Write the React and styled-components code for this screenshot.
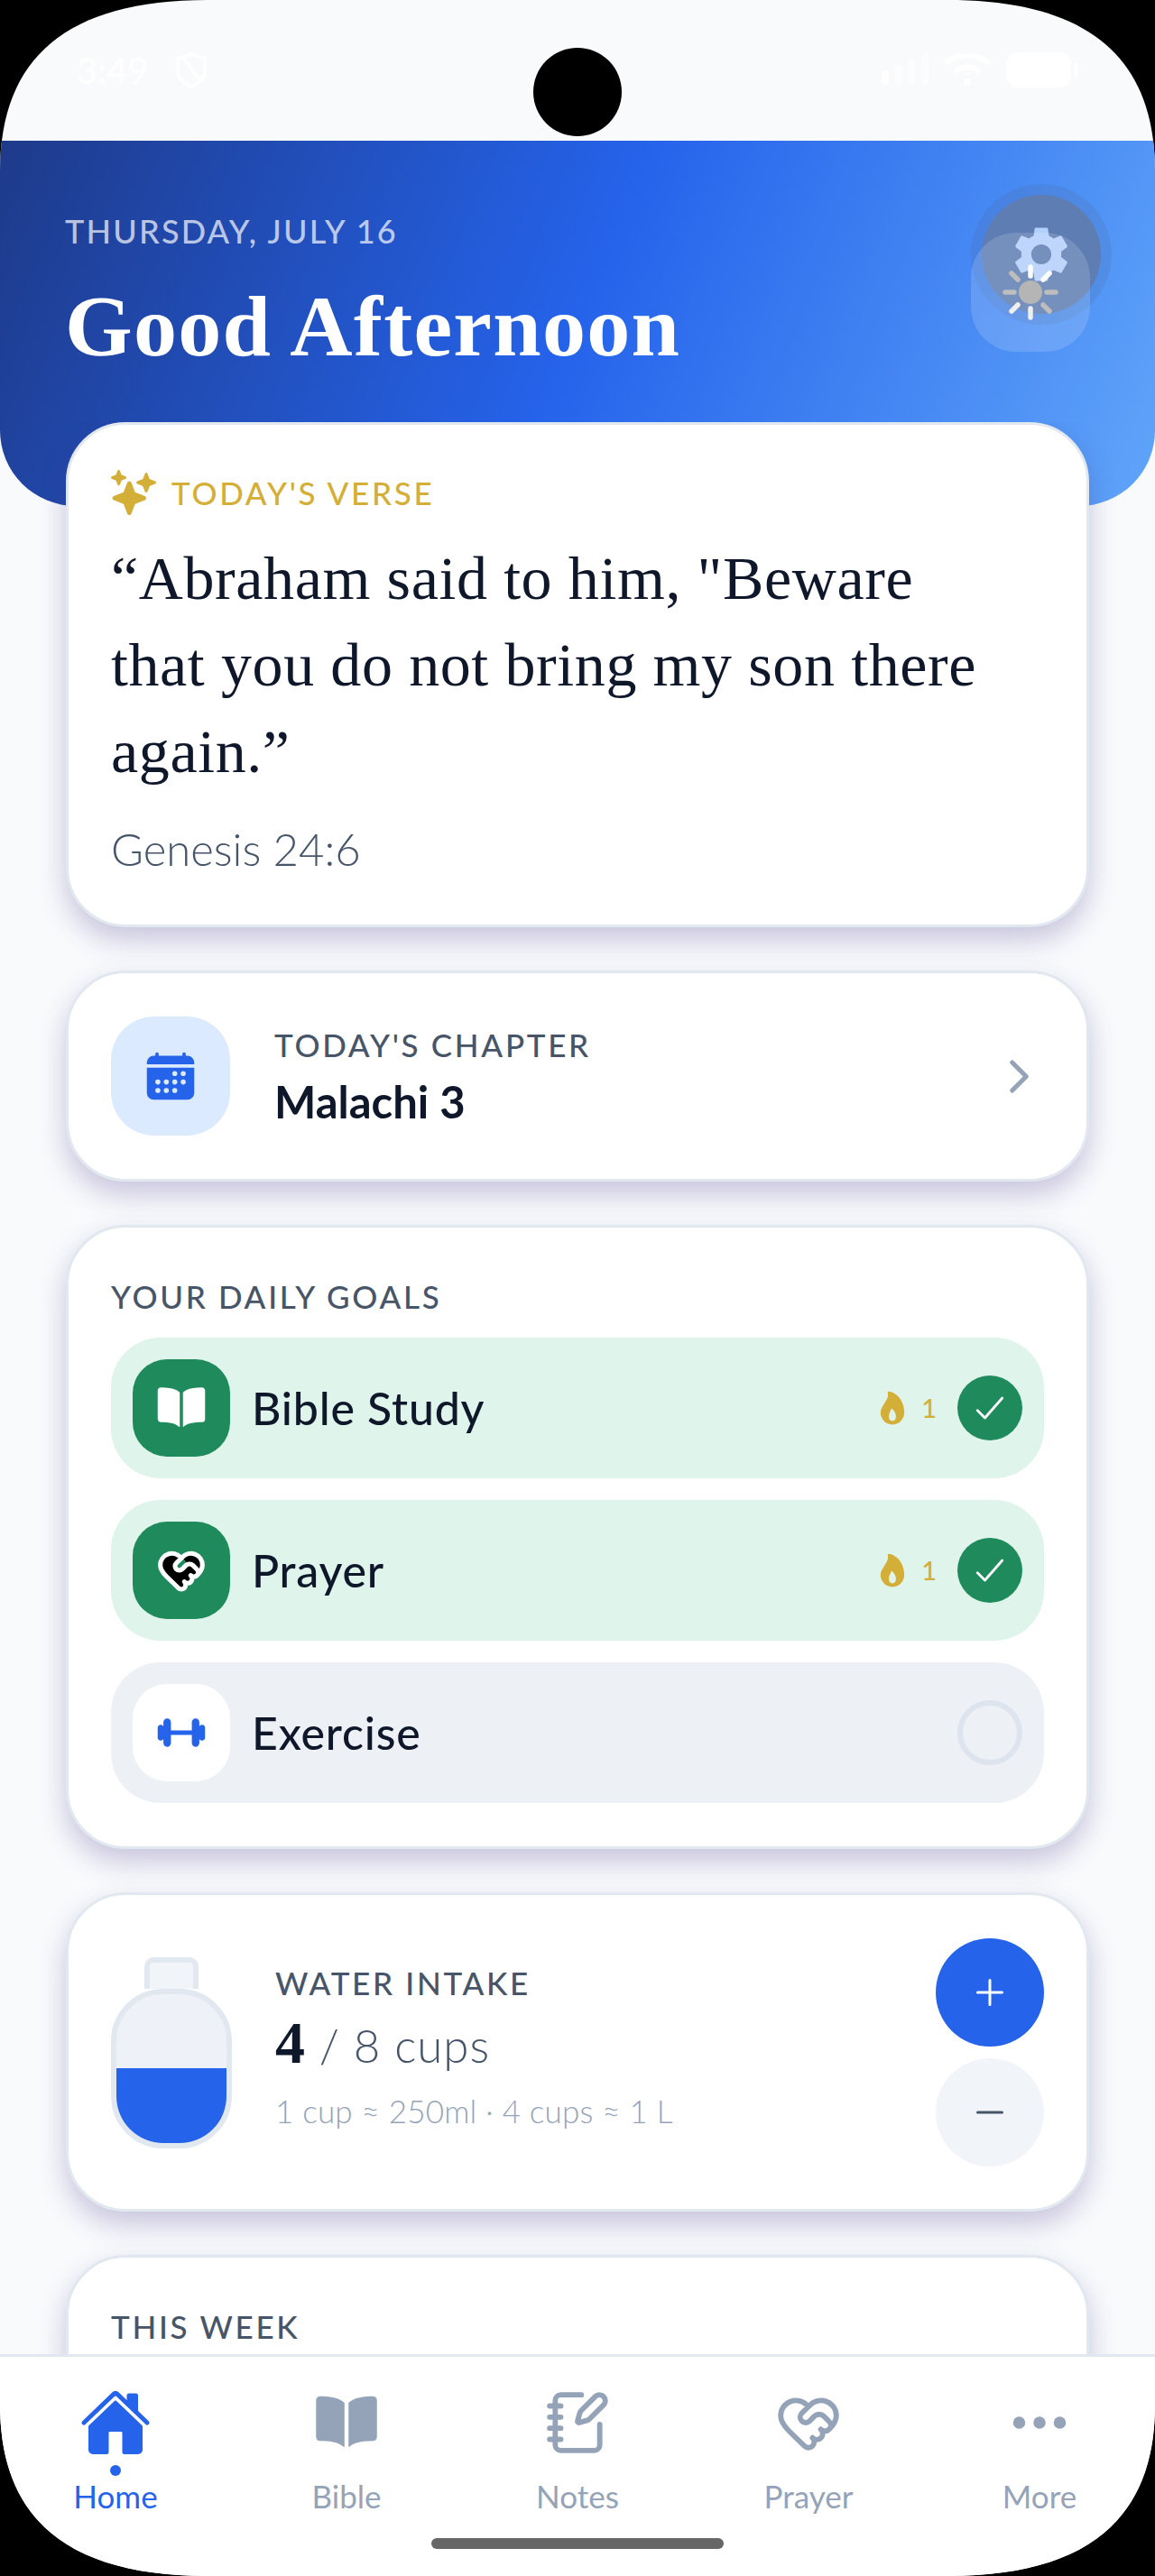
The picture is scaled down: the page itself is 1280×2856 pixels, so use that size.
import React from 'react';
import styled, { createGlobalStyle } from 'styled-components';
import { IoHome, IoBook, IoCalendar, IoFlame, IoSparkles, IoBarbell, IoCheckmark, IoAdd, IoRemove, IoEllipsisHorizontal, IoChevronForward } from 'react-icons/io5';
import { MdSettings } from 'react-icons/md';
import { NotebookPen, HeartHandshake } from 'lucide-react';

const sans = `Lato, "Liberation Sans", sans-serif`;
const serif = `"Liberation Serif", serif`;

const Global = createGlobalStyle`
  html, body { margin: 0; padding: 0; background: #000; }
  * { box-sizing: border-box; }
`;

const Screen = styled.div`
  position: relative;
  width: 1280px;
  height: 2856px;
  background: #f8fafc;
  display: flex;
  flex-direction: column;
  overflow: hidden;
  font-family: ${sans};
  color: #0f172a;
  clip-path: path("M0,190 C0,64 74,0 230,0 L1050,0 C1206,0 1280,64 1280,190 L1280,2666 C1280,2792 1206,2856 1050,2856 L230,2856 C74,2856 0,2792 0,2666 Z");
`;

const StatusBar = styled.div`
  height: 156px;
  flex: none;
  display: flex;
  justify-content: space-between;
  padding: 58px 84px 0 85px;
  color: #fff;
`;
const StatusGroup = styled.div`
  display: flex;
  align-items: flex-start;
  gap: ${p => p.$gap}px;
  height: 40px;
`;
const Time = styled.span`
  font-size: 40px;
  line-height: 40px;
  font-weight: 500;
`;
const Camera = styled.div`
  position: absolute;
  left: 591px;
  top: 53px;
  width: 98px;
  height: 98px;
  border-radius: 50%;
  background: #000;
`;

const Header = styled.header`
  height: 405px;
  flex: none;
  padding: 78px 72px 0;
  border-radius: 0 0 84px 84px;
  background: linear-gradient(112deg, #1e3a8a 0%, #2563eb 50%, #60a5fa 100%);
`;
const DateLine = styled.div`
  font-size: 36px;
  line-height: 44px;
  font-weight: 500;
  letter-spacing: 2.2px;
  color: rgba(255, 255, 255, 0.7);
`;
const Title = styled.h1`
  margin: 29px 0 0;
  font-family: ${serif};
  font-size: 96px;
  line-height: 110px;
  font-weight: 700;
  letter-spacing: 1.3px;
  color: #fff;
`;
const GearRing = styled.div`
  position: absolute;
  left: 1076px;
  top: 204px;
  width: 156px;
  height: 156px;
  border-radius: 50%;
  background: rgba(80, 90, 120, 0.14);
  display: flex;
  align-items: center;
  justify-content: center;
`;
const GearDisc = styled.div`
  width: 132px;
  height: 132px;
  border-radius: 50%;
  background: #5e7db2;
  display: flex;
  align-items: center;
  justify-content: center;
  color: #b3cffb;
`;
const SunTile = styled.div`
  position: absolute;
  left: 1076px;
  top: 258px;
  width: 132px;
  height: 132px;
  border-radius: 50px;
  background: rgba(255, 255, 255, 0.15);
  display: flex;
  align-items: center;
  justify-content: center;
`;

const Content = styled.main`
  flex: 1;
  min-height: 0;
  margin-top: -93px;
  padding: 0 73px;
  display: flex;
  flex-direction: column;
  gap: 48px;
  overflow: hidden;
  position: relative;
`;
const Card = styled.section`
  flex: none;
  background: #fff;
  border: 3px solid #e2e8f0;
  border-radius: 66px;
  padding: ${p => p.$pad};
  min-height: ${p => p.$minHeight || 0};
  box-shadow: 0 14px 30px rgba(76, 56, 140, 0.28);
`;
const VerseHead = styled.div`
  display: flex;
  align-items: center;
  gap: 17px;
  color: #d4af37;
  height: 50px;
`;
const Eyebrow = styled.div`
  font-size: 35px;
  line-height: 44px;
  font-weight: 500;
  letter-spacing: 2.7px;
  color: ${p => p.$color || '#475569'};
`;
const Verse = styled.p`
  margin: 22px 0 0;
  max-width: 985px;
  font-family: ${serif};
  font-size: 68px;
  line-height: 96px;
  letter-spacing: 0.6px;
  color: #0f172a;
`;
const Reference = styled.div`
  margin-top: 30px;
  font-size: 49px;
  line-height: 60px;
  font-weight: 300;
  color: #475569;
`;

const ChapterRow = styled.div`
  display: flex;
  align-items: center;
  height: 132px;
`;
const ChapterTile = styled.div`
  width: 132px;
  height: 132px;
  flex: none;
  border-radius: 48px;
  background: #dbeafe;
  color: #2563eb;
  display: flex;
  align-items: center;
  justify-content: center;
`;
const ChapterText = styled.div`
  flex: 1;
  margin-left: 49px;
`;
const ChapterName = styled.div`
  margin-top: 12px;
  font-size: 49px;
  line-height: 58px;
  font-weight: 700;
  color: #0f172a;
`;
const Chevron = styled.div`
  color: #94a3b8;
  display: flex;
`;

const GoalList = styled.div`
  margin-top: 24px;
  display: flex;
  flex-direction: column;
  gap: 24px;
`;
const GoalRow = styled.div`
  height: 156px;
  border-radius: 55px;
  padding: 0 24px;
  display: flex;
  align-items: center;
  background: ${p => (p.$done ? '#dff4ea' : '#edf1f6')};
`;
const GoalTile = styled.div`
  width: 108px;
  height: 108px;
  flex: none;
  border-radius: 38px;
  display: flex;
  align-items: center;
  justify-content: center;
  background: ${p => (p.$done ? '#1f8a5c' : '#fff')};
  color: ${p => (p.$done ? '#fff' : '#2563eb')};
`;
const GoalName = styled.div`
  flex: 1;
  margin-left: 24px;
  font-size: 50px;
  line-height: 60px;
  font-weight: 500;
  letter-spacing: 0.8px;
  color: #0f172a;
`;
const Streak = styled.div`
  display: flex;
  align-items: center;
  gap: 11px;
  margin-right: 23px;
  color: #d4af37;
  font-size: 29px;
  line-height: 36px;
  font-weight: 500;
`;
const Check = styled.div`
  width: 72px;
  height: 72px;
  border-radius: 50%;
  display: flex;
  align-items: center;
  justify-content: center;
  color: #fff;
  background: ${p => (p.$done ? '#1f8a5c' : 'transparent')};
  border: ${p => (p.$done ? 'none' : '6px solid #dde4ee')};
`;

const WaterRow = styled.div`
  display: flex;
  align-items: center;
`;
const Bottle = styled.div`
  width: 134px;
  flex: none;
  display: flex;
  flex-direction: column;
  align-items: center;
`;
const BottleCap = styled.div`
  width: 60px;
  height: 35px;
  background: #f1f5f9;
  border: 6px solid #e2e8f0;
  border-bottom: none;
  border-radius: 10px 10px 0 0;
`;
const BottleBody = styled.div`
  width: 134px;
  height: 177px;
  background: #eef1f7;
  border: 6px solid #e2e8f0;
  border-radius: 58px;
  overflow: hidden;
  display: flex;
  align-items: flex-end;
`;
const BottleFill = styled.div`
  width: 100%;
  background: #2563eb;
`;
const WaterText = styled.div`
  flex: 1;
  margin-left: 48px;
  padding-bottom: 13px;
`;
const WaterCount = styled.div`
  margin-top: 15px;
  font-size: 51px;
  line-height: 60px;
  font-weight: 300;
  letter-spacing: 1px;
  color: #475569;
`;
const WaterNum = styled.span`
  font-family: ${serif};
  font-size: 66px;
  font-weight: 700;
  color: #0f172a;
`;
const WaterHint = styled.div`
  margin-top: 20px;
  font-size: 35px;
  line-height: 44px;
  font-weight: 300;
  letter-spacing: 0.2px;
  color: #94a3b8;
`;
const WaterButtons = styled.div`
  display: flex;
  flex-direction: column;
  gap: 13px;
`;
const RoundButton = styled.div`
  width: 120px;
  height: 120px;
  border-radius: 50%;
  display: flex;
  align-items: center;
  justify-content: center;
  background: ${p => (p.$primary ? '#2563eb' : '#f1f5f9')};
  color: ${p => (p.$primary ? '#fff' : '#475569')};
`;

const TabBar = styled.nav`
  height: 246px;
  flex: none;
  position: relative;
  z-index: 1;
  background: #fff;
  border-top: 3px solid #e2e8f0;
  display: grid;
  grid-template-columns: repeat(5, 1fr);
`;
const Tab = styled.div`
  display: flex;
  flex-direction: column;
  align-items: center;
  color: ${p => (p.$active ? '#2563eb' : '#94a3b8')};
`;
const TabIcon = styled.div`
  height: 78px;
  margin-top: 34px;
  display: flex;
  align-items: center;
  justify-content: center;
`;
const TabDot = styled.div`
  width: 12px;
  height: 12px;
  margin-top: 8px;
  border-radius: 50%;
  background: ${p => (p.$active ? '#2563eb' : 'transparent')};
`;
const TabLabel = styled.div`
  margin-top: 2px;
  font-size: 35px;
  line-height: 40px;
  font-weight: 400;
`;
const HomeIndicator = styled.div`
  position: absolute;
  left: 478px;
  bottom: 30px;
  width: 324px;
  height: 12px;
  border-radius: 6px;
  background: #666;
`;

const Signal = () => (
  <svg width="52" height="36" viewBox="0 0 52 36" fill="#fff">
    <rect x="0" y="20" width="8" height="16" rx="4" />
    <rect x="15" y="13" width="8" height="23" rx="4" opacity=".5" />
    <rect x="29" y="6" width="8" height="30" rx="4" opacity=".5" />
    <rect x="44" y="0" width="8" height="36" rx="4" opacity=".5" />
  </svg>
);
const Wifi = () => (
  <svg width="50" height="38" viewBox="0 0 50 38" fill="none" stroke="#fff" strokeWidth="6" strokeLinecap="round">
    <path d="M3 11C16 1 34 1 47 11" />
    <path d="M13 20C20 15 30 15 37 20" />
    <circle cx="25" cy="33" r="4" fill="#fff" stroke="none" />
  </svg>
);
const Battery = () => (
  <svg width="81" height="40" viewBox="0 0 81 40" fill="#fff">
    <rect x="0" y="0" width="72" height="39" rx="13" />
    <rect x="75" y="11" width="5" height="17" rx="2.5" opacity=".7" />
  </svg>
);
const ShieldOff = () => (
  <svg width="34" height="40" viewBox="0 0 34 40" fill="none" stroke="#fff" strokeWidth="3.5" strokeLinecap="round" strokeLinejoin="round">
    <path d="M17 2 L32 7 V20 C32 29 25 35 17 38 C9 35 2 29 2 20 V7 Z" />
    <path d="M8 6 L26 30" />
  </svg>
);
const Sun = () => (
  <svg width="92" height="92" viewBox="0 0 92 92" strokeWidth="5.5" strokeLinecap="round">
    <circle cx="46" cy="46" r="13" fill="#b5b5b5" />
    <path d="M46 18V28" stroke="#fff" />
    <path d="M46 64V74" stroke="#eee" />
    <path d="M25 25L32 32" stroke="#bdbdbd" />
    <path d="M67 25L60 32" stroke="#fff" />
    <path d="M18 46H28" stroke="#bdbdbd" />
    <path d="M64 46H74" stroke="#bdbdbd" />
    <path d="M25 67L32 60" stroke="#eee" />
    <path d="M67 67L60 60" stroke="#bdbdbd" />
  </svg>
);

const goals = [
  { name: 'Bible Study', done: true, icon: <IoBook size={56} /> },
  { name: 'Prayer', done: true, icon: <HeartHandshake size={56} fill="#000" strokeWidth={2.2} /> },
  { name: 'Exercise', done: false, icon: <IoBarbell size={56} /> },
];

const tabs = [
  { label: 'Home', active: true, icon: <IoHome size={80} /> },
  { label: 'Bible', icon: <IoBook size={72} /> },
  { label: 'Notes', icon: <NotebookPen size={74} strokeWidth={1.9} /> },
  { label: 'Prayer', icon: <HeartHandshake size={74} strokeWidth={1.9} /> },
  { label: 'More', icon: <IoEllipsisHorizontal size={72} /> },
];

export default function App() {
  return (
    <Screen>
      <Global />
      <StatusBar>
        <StatusGroup $gap={30}>
          <Time>3:49</Time>
          <ShieldOff />
        </StatusGroup>
        <StatusGroup $gap={18}>
          <Signal />
          <Wifi />
          <Battery />
        </StatusGroup>
      </StatusBar>
      <Camera />

      <Header>
        <DateLine>THURSDAY, JULY 16</DateLine>
        <Title>Good Afternoon</Title>
      </Header>
      <GearRing>
        <GearDisc>
          <MdSettings size={74} />
        </GearDisc>
      </GearRing>
      <SunTile>
        <Sun />
      </SunTile>

      <Content>
        <Card $pad="50px 47px 54px">
          <VerseHead>
            <IoSparkles size={50} />
            <Eyebrow $color="#d4af37">TODAY'S VERSE</Eyebrow>
          </VerseHead>
          <Verse>“Abraham said to him, "Beware that you do not bring my son there again.”</Verse>
          <Reference>Genesis 24:6</Reference>
        </Card>

        <Card $pad="48px 47px">
          <ChapterRow>
            <ChapterTile>
              <IoCalendar size={60} />
            </ChapterTile>
            <ChapterText>
              <Eyebrow>TODAY'S CHAPTER</Eyebrow>
              <ChapterName>Malachi 3</ChapterName>
            </ChapterText>
            <Chevron>
              <IoChevronForward size={55} />
            </Chevron>
          </ChapterRow>
        </Card>

        <Card $pad="54px 47px 48px">
          <Eyebrow>YOUR DAILY GOALS</Eyebrow>
          <GoalList>
            {goals.map(g => (
              <GoalRow key={g.name} $done={g.done}>
                <GoalTile $done={g.done}>{g.icon}</GoalTile>
                <GoalName>{g.name}</GoalName>
                {g.done && (
                  <Streak>
                    <IoFlame size={42} />
                    <span>1</span>
                  </Streak>
                )}
                <Check $done={g.done}>{g.done && <IoCheckmark size={44} />}</Check>
              </GoalRow>
            ))}
          </GoalList>
        </Card>

        <Card $pad="48px 47px 47px">
          <WaterRow>
            <Bottle>
              <BottleCap />
              <BottleBody>
                <BottleFill style={{ height: `${(4 / 8) * 100}%` }} />
              </BottleBody>
            </Bottle>
            <WaterText>
              <Eyebrow>WATER INTAKE</Eyebrow>
              <WaterCount>
                <WaterNum>4</WaterNum> / 8 cups
              </WaterCount>
              <WaterHint>1 cup ≈ 250ml · 4 cups ≈ 1 L</WaterHint>
            </WaterText>
            <WaterButtons>
              <RoundButton $primary>
                <IoAdd size={48} />
              </RoundButton>
              <RoundButton>
                <IoRemove size={48} />
              </RoundButton>
            </WaterButtons>
          </WaterRow>
        </Card>

        <Card $pad="54px 47px" $minHeight="400px">
          <Eyebrow>THIS WEEK</Eyebrow>
        </Card>
      </Content>

      <TabBar>
        {tabs.map(t => (
          <Tab key={t.label} $active={t.active}>
            <TabIcon>{t.icon}</TabIcon>
            <TabDot $active={t.active} />
            <TabLabel>{t.label}</TabLabel>
          </Tab>
        ))}
        <HomeIndicator />
      </TabBar>
    </Screen>
  );
}
